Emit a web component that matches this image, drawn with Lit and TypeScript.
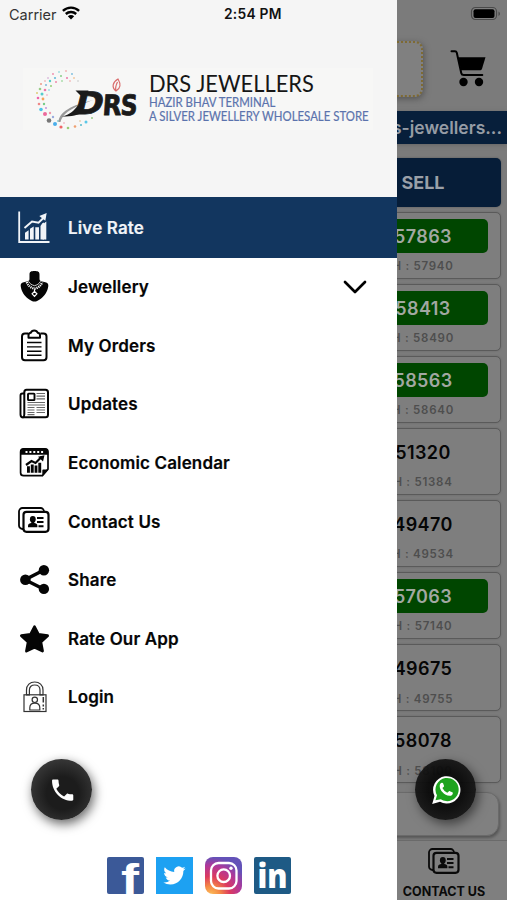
import { LitElement, html, svg, css, nothing } from "lit";
import { customElement, property } from "lit/decorators.js";

const contactIcon = svg`
  <rect x="2" y="4" width="25" height="21" rx="3.5" fill="none" stroke="currentColor" stroke-width="1.8"/>
  <rect x="6.5" y="7.8" width="25" height="20" rx="3" fill="var(--icon-bg, #fff)" stroke="currentColor" stroke-width="2.2"/>
  <ellipse cx="15.8" cy="15.2" rx="2.900" ry="3.300"/>
  <path d="M11 23.300v-1.600c0-1.600 1.800-2.200 3.400-2.600h2.800c1.600.4 3.200 1 3.200 2.600v1.600z"/>
  <path d="M14.300 17h3v3h-3z"/>
  <path d="M20 14h6.500M20 18h6.500M21.500 22.200h5" stroke="currentColor" stroke-width="2"/>`;

const icons: Record<string, unknown> = {
  chart: svg`
    <path d="M2.200 1.500V32H32.500" fill="none" stroke="currentColor" stroke-width="1.800"/>
    <path d="M8 22.800l3.600-2.500v9.200H8zM13 18.800l3.700-2.300v13H13zM18.300 17.300H22v12.200h-3.700zM23.500 16l1.800-2.800 1.700-.600v16.900h-3.500zM28.500 12h.200v17.500h-.2z"/>
    <path d="M25.500 14.500l3.800-3v18h-3.800z"/>
    <path d="M7.500 18l7.500-6.500 6.500 1.200 6.200-6" fill="none" stroke="currentColor" stroke-width="1.900"/>
    <path d="M22.300 6l7.400-3-1.400 7.800z"/>`,
  necklace: svg`
    <path d="M12.500 5.500C12.500 2.600 14.200 2 17.500 2s5 .6 5 3.500v4.700c0 1.600 1.600 2.100 4.800 2.700 3 .6 4.300 1.700 4 4-.6 5.600-4 9.900-7.200 12.500-2.500 2-4.700 3.100-6.600 3.100s-4.100-1.100-6.600-3.100c-3.200-2.600-6.600-6.900-7.200-12.500-.3-2.300 1-3.400 4-4 3.200-.6 4.800-1.100 4.800-2.700z"/>
    <path d="M9.700 13c1.500 4 4.300 6 7.800 6.600 3.500-.6 6.300-2.600 7.800-6.600" fill="none" stroke="#fff" stroke-width="2.300" stroke-dasharray="1.200 .9"/>
    <path d="M11.500 12.300c1.300 2.700 3.500 3.700 6 4.400 2.500-.7 4.700-1.700 6-4.400" fill="none" stroke="#fff" stroke-width=".8"/>
    <path d="M17.500 20.300v2m0 0l-2.400 2.500 2.400 2.500 2.400-2.500z" fill="none" stroke="#fff" stroke-width="1.200"/>`,
  clipboard: svg`
    <path d="M11 5.500H8c-1.800 0-3 1.200-3 3v20.700c0 1.800 1.200 3 3 3h18.500c1.800 0 3-1.200 3-3V8.500c0-1.800-1.200-3-3-3h-3" fill="none" stroke="currentColor" stroke-width="2"/>
    <path d="M11.500 9.800V7c0-1.300 1-2 2.200-2.200.6-1.500 1.900-2.300 3.500-2.300s3 .8 3.600 2.300c1.200.2 2.200.9 2.200 2.200v2.800z" fill="none" stroke="currentColor" stroke-width="2" stroke-linejoin="round"/>
    <path d="M10 14.500h14.500M10 18.900h14.500M10 23.200h14.500M10 27.300h14.500" stroke="currentColor" stroke-width="1.400"/>`,
  news: svg`
    <path d="M7 7.500H5.500c-1.300 0-2 .8-2 2v19c0 2 1 3 2.800 3" fill="none" stroke="currentColor" stroke-width="1.900"/>
    <path d="M9.500 3.800h19c1.500 0 2.500 1 2.500 2.500v22.500c0 1.500-1 2.500-2.500 2.500H6c1.200-.5 1.300-1.500 1.300-3v-22c0-1.500.7-2.500 2.200-2.500z" fill="none" stroke="currentColor" stroke-width="2"/>
    <rect x="11" y="7.600" width="6.500" height="6.500" rx=".6" fill="none" stroke="currentColor" stroke-width="1.900"/>
    <path d="M19.500 7.500H28M19.500 10.200H28M19.500 12.900H28M10.500 16.500H28M10.500 19H28M10.500 21.500h7M19.500 21.500H28M10.500 24h7M19.500 24H28M10.500 26.500h7M19.500 26.500H28M10.500 28.700h7" stroke="currentColor" stroke-width="1.200" opacity=".6"/>`,
  calendar: svg`
    <path d="M31 24V7c0-2-1-3.200-3-3.200H6.600c-2 0-3 1.200-3 3.200v20.700c0 2 1 3 3 3h18.800z" fill="none" stroke="currentColor" stroke-width="1.700"/>
    <path d="M3.500 9.800V6.300c0-1.500 1-2.700 2.700-2.700h22.300c1.700 0 2.700 1.200 2.700 2.700v3.500z"/>
    <path d="M8.500 7h18" stroke="#fff" stroke-width="2" stroke-dasharray="2 1.900"/>
    <path d="M31.800 24.500l-6.500 7v-5.700c0-.8.400-1.300 1.200-1.300z"/>
    <path d="M10 21.300h2.900v6.500H10zM13.800 19.600h2.900v8.200h-2.900zM17.600 20.600h2.800v7.200h-2.800zM21.300 17.800h2.900v10h-2.900z"/>
    <path d="M9 20l5.500-4 4 2 6-6" fill="none" stroke="currentColor" stroke-width="2.200"/>
    <path d="M21 11.800l6.500-1.500-1.500 6.300z"/>`,
  contact: contactIcon,
  share: svg`
    <path d="M27 8L8 17.700 27 27.300" fill="none" stroke="currentColor" stroke-width="3.400"/>
    <circle cx="26.900" cy="8.300" r="5.200"/><circle cx="8.400" cy="17.700" r="5.300"/><circle cx="26.900" cy="26.900" r="5.200"/>`,
  star: svg`
    <path d="M17.500 5.800l3.900 7.700 9.200 1.200-6.800 6.400 1.700 9-8-3.800-8 3.800 1.700-9-6.800-6.400 9.200-1.200z" stroke="currentColor" stroke-width="2.800" stroke-linejoin="round"/>`,
  lock: svg`
    <g fill="none" stroke="#333" stroke-width="1.200">
      <path d="M9.500 15.800V11c0-5 3.500-8 8.200-8s8.300 3 8.300 8v4.800h-3V11c0-3.300-2.200-5-5.300-5s-5.300 1.700-5.300 5v4.800z"/>
      <rect x="7" y="15.800" width="22" height="16.700"/>
      <circle cx="17.800" cy="20.800" r="2.700"/>
      <path d="M12.800 31v-2.300c0-3 2-4.600 5-4.600s5 1.600 5 4.600V31z"/>
      <path d="M26.300 18v5.500M26.300 25.500v2M26.300 29v1.500" stroke-width="1.500"/>
    </g>`,
};

@customElement("ui-icon")
class UiIcon extends LitElement {
  @property() name = "";
  static styles = css`
    :host { display: block; width: 35px; height: 35px; }
    svg { display: block; width: 100%; height: 100%; fill: currentColor; }
  `;
  render() {
    return html`<svg viewBox="0 0 35 35">${icons[this.name]}</svg>`;
  }
}

/* Confetti ring round the emblem: x, y, radius, colour. */
const dots: [number, number, number, string][] = [
  [67, 70, .8, "#e88"], [60, 71, .8, "#6cc"], [54, 73, .9, "#e8a"], [73, 73, .9, "#7bd"], [62, 75, 1, "#8c8"],
  [68, 77, 1, "#e7a"], [75, 77, .8, "#ea6"], [56, 77, 1.1, "#6bd"], [49, 77, .8, "#c9c"], [79, 80, .7, "#bbb"],
  [46, 80, .8, "#e99"], [51, 80, 1.2, "#5cc"], [57, 81, 1, "#e8a"], [63, 80, .8, "#7c7"], [71, 80, .7, "#e88"],
  [42, 83, 1, "#e98"], [47, 84, 1.1, "#8bd"], [52, 85, 1, "#9c7"], [41, 88, 1.3, "#9c8"], [46, 89, 1.3, "#e7a"],
  [50, 89, .8, "#6cd"], [38, 92, 1, "#dc7"], [43, 93, 1.5, "#5cc"], [39, 97, 1.3, "#e6a"], [44, 98, 1.4, "#f8a35c"],
  [48, 94, .8, "#e9b"], [40, 103, 1.3, "#e88"], [45, 103, 1.2, "#7c8"], [42, 108.5, 1.8, "#4ac4e8"], [47, 107, .9, "#b8d"],
  [46, 113, 2, "#ec6a9c"], [51, 112, 1.2, "#e9a"], [50, 119.500, 2.3, "#777"], [54, 116, 1.2, "#9ad"], [56, 123, 2, "#4aaeea"],
  [62, 126, 1.6, "#e66"], [59, 120, .9, "#8cc"], [69, 127, 1.3, "#9c7"], [65, 122, .8, "#e9a"], [76, 125.5, 1.3, "#f0a070"],
  [82, 124, 1, "#5bc"], [87, 121, 1.5, "#5ac8e8"], [93, 117, 1, "#9c8"], [81, 120, .8, "#db8"],
];

@customElement("brand-logo")
class BrandLogo extends LitElement {
  static styles = css`
    :host { display: flex; width: 350px; height: 62px; background: #f7f7f6; }
    svg { width: 126px; height: 64px; flex: none; }
    .words { display: flex; flex-direction: column; padding-top: 3px; white-space: nowrap; }
    .words > div { width: max-content; transform-origin: left; }
    .name { font: 400 23.5px/25px Lato, sans-serif; color: #161616; transform: scaleX(.93); }
    .tag { font: 400 12.5px/14px Lato, sans-serif; color: #5b73ad; -webkit-text-stroke: .2px #5b73ad; transform: scaleX(.913); }
  `;
  render() {
    return html`
      <svg viewBox="24 67 126 64">
        ${dots.map(([x, y, r, c]) => svg`<circle cx=${x} cy=${y} r=${r} fill=${c}/>`)}
        <path d="M59.500 121c.5-10 13-17 35-22-17 6-30 11-33 22z" fill="#999"/>
        <path d="M63 115.500c8-2 12-6 16-11l6 6c-6 4-12 5-22 5z" fill="#1a1a1a"/>
        <path d="M76.500 89.500h13l-2 5h-6z" fill="#1a1a1a"/>
        <g font-family="DejaVu Sans" font-weight="700" fill="#1a1a1a" stroke="#1a1a1a" stroke-width=".8">
          <text transform="translate(74 113) skewX(-14)" font-size="31" textLength="28" lengthAdjust="spacingAndGlyphs">D</text>
          <text transform="translate(103 114) skewX(-4)" font-size="28" textLength="19" lengthAdjust="spacingAndGlyphs">R</text>
          <text transform="translate(121 114) skewX(-4)" font-size="28" textLength="17" lengthAdjust="spacingAndGlyphs">S</text>
        </g>
        <path d="M117 90c-5-4-3-9 2-12 3 5 3 9-2 12zm0 0c-1-3 0-6 1.5-9" fill="none" stroke="#d96b6b" stroke-width="1.200"/>
      </svg>
      <div class="words">
        <div class="name">DRS JEWELLERS</div>
        <div class="tag">HAZIR BHAV TERMINAL</div>
        <div class="tag">A SILVER JEWELLERY WHOLESALE STORE</div>
      </div>`;
  }
}

@customElement("rate-card")
class RateCard extends LitElement {
  @property() price = "";
  @property() high = "";
  @property({ type: Boolean }) up = false;
  static styles = css`
    :host { display: flex; flex-direction: column; align-items: center; width: 156px; height: 67px; box-sizing: border-box;
      border: 1.5px solid #5a5a5a; border-radius: 5px; background: #7e7e7e; padding-top: 6px; box-shadow: 0 0 2px #666; }
    .price { width: 130px; height: 34.5px; border-radius: 5px; text-align: center; color: #060606;
      font: 600 18px/36px Inter, sans-serif; letter-spacing: .4px; }
    .up { background: #004600; color: #a2a8a2; }
    .high { font: 600 11.5px/15px Inter, sans-serif; color: #4e4e4e; letter-spacing: .75px; padding-top: 6px; }
  `;
  render() {
    return html`<div class="price ${this.up ? "up" : ""}">${this.price}</div><div class="high">H : ${this.high}</div>`;
  }
}

const rates = [
  { price: "57863", high: "57940", up: true },
  { price: "58413", high: "58490", up: true },
  { price: "58563", high: "58640", up: true },
  { price: "51320", high: "51384", up: false },
  { price: "49470", high: "49534", up: false },
  { price: "57063", high: "57140", up: true },
  { price: "49675", high: "49755", up: false },
  { price: "58078", high: "58100", up: false },
];

const menu = [
  { icon: "chart", label: "Live Rate", active: true },
  { icon: "necklace", label: "Jewellery", expand: true },
  { icon: "clipboard", label: "My Orders" },
  { icon: "news", label: "Updates" },
  { icon: "calendar", label: "Economic Calendar" },
  { icon: "contact", label: "Contact Us" },
  { icon: "share", label: "Share" },
  { icon: "star", label: "Rate Our App" },
  { icon: "lock", label: "Login" },
];

@customElement("app-root")
class AppRoot extends LitElement {
  static styles = css`
    :host { display: block; position: relative; width: 507px; height: 900px; overflow: hidden; font-family: Inter, sans-serif; }
    svg { display: block; flex: none; }
    .page { display: flex; flex-direction: column; align-items: flex-end; height: 900px; background: #7b7b7b; }
    .status { height: 27px; display: flex; align-items: center; padding-right: 6px; }
    .top { height: 84px; display: flex; align-items: center; padding-right: 20px; gap: 27px; }
    .top svg { margin-bottom: 2px; }
    .frame { width: 150px; height: 52px; border: 2px dotted #7e6a33; border-radius: 8px; background: #808080; box-shadow: 1px 2px 6px #555; }
    .ticker { align-self: stretch; height: 33px; background: #071f3b; color: #969ca5; text-align: right; padding-right: 5px;
      font: 600 17.5px/34px Inter, sans-serif; box-shadow: 0 1px 4px #666; }
    .sell { width: 156px; height: 49px; margin: 14px 6px 4.5px 0; border-radius: 5px; background: #061d38; color: #9aa0a8;
      text-align: center; font: 700 18px/50px Inter, sans-serif; box-shadow: 0 0 2px #555; }
    .rates { display: flex; flex-direction: column; gap: 5.1px; padding-right: 6px; }
    .panel { width: 200px; height: 44px; margin: 9px 8px 0 0; box-sizing: border-box; border: 1px solid #6a6a6a; border-radius: 12px;
      background: #808080; box-shadow: 1px 2px 3px #555; }
    .tabs { margin-top: auto; align-self: stretch; height: 60px; box-sizing: border-box; border-top: 1px solid #6a6a6a; background: #7f7f7f;
      display: flex; justify-content: flex-end; }
    .tab { width: 126px; display: flex; flex-direction: column; align-items: center; --icon-bg: #7f7f7f;
      font: 700 12.5px/16px Inter, sans-serif; color: #0a0a0a; padding-top: 4px; box-sizing: border-box; }
    .tab span { padding-top: 4px; }
    .drawer { position: absolute; left: 0; top: 0; width: 397px; height: 900px; background: #fff; display: flex; flex-direction: column; }
    .head { height: 196.5px; flex: none; background: #f5f5f5; }
    .bar { display: flex; align-items: center; height: 28px; padding-left: 9px; font-size: 14.5px; color: #333; }
    .carrier { letter-spacing: 0; margin-right: 6px; width: 47px; white-space: nowrap; }
    .bar svg { margin-bottom: 2px; }
    .clock { font: 600 13.8px/28px Inter, sans-serif; color: #111; margin-left: 144px; letter-spacing: .25px; }
    .logo { padding: 40px 0 0 23px; }
    .row { display: flex; align-items: center; height: 58.6px; flex: none; padding: 0 30px 0 17px; gap: 16px;
      font-size: 17px; font-weight: 600; color: #050505; }
    .row ui-icon { --icon-bg: #fff; }
    .active { height: 61px; background: #12365f; color: #f1f4f8; }
    .label { flex: 1; letter-spacing: .14px; padding-top: 1px; -webkit-text-stroke: .2px currentColor; }
    .social { display: flex; gap: 12px; margin: auto 0 6px 107px; }
    .social svg { overflow: visible; }
    .fab { position: absolute; top: 759px; width: 61px; height: 61px; border-radius: 50%; display: flex; align-items: center; justify-content: center;
      background: radial-gradient(circle at 52% 56%, #1c1c1c 35%, #363636 72%); box-shadow: 2px 4px 11px rgba(0, 0, 0, .6); }
    .call { left: 31px; }
    .chat { left: 415px; background: radial-gradient(circle, rgba(8, 8, 8, .94) 40%, rgba(20, 20, 20, .92) 75%); box-shadow: 3px 4px 11px rgba(0, 0, 0, .5); }
  `;

  render() {
    return html`
      <div class="page">
        <div class="status">
          <svg width="31" height="16" viewBox="0 0 31 16">
            <rect x="1.5" y="1.5" width="25" height="12" rx="4" fill="#808080" stroke="#4a4a4a" stroke-width="1.2"/>
            <rect x="3.5" y="3.3" width="21" height="8.7" rx="2" fill="#000"/>
            <path d="M28.500 5.500v4.500q1.500-.7 1.500-2.200T28.500 5.500z" fill="#4a4a4a"/>
          </svg>
        </div>
        <div class="top">
          <div class="frame"></div>
          <svg width="37" height="38" viewBox="0 0 37 38">
            <path d="M1.500 2.200h3.500c1 0 1.500.5 1.800 1.500l4.500 20.500c.3 1.300 1.200 1.800 2.500 1.800h18.500" fill="none" stroke="#000" stroke-width="2" stroke-linecap="round"/>
            <path d="M8 8.200h27.500l-3.500 11.500c-.4 1.200-1.200 1.600-2.300 1.600H11z"/>
            <circle cx="13.500" cy="33" r="4.200"/><circle cx="29" cy="33" r="4.200"/>
          </svg>
        </div>
        <div class="ticker">www.drs-jewellers...</div>
        <div class="sell">SELL</div>
        <div class="rates">
          ${rates.map((r) => html`<rate-card .price=${r.price} .high=${r.high} .up=${r.up}></rate-card>`)}
        </div>
        <div class="panel"></div>
        <div class="tabs"><div class="tab"><ui-icon name="contact"></ui-icon><span>CONTACT US</span></div></div>
      </div>

      <div class="drawer">
        <div class="head">
          <div class="bar">
            <span class="carrier">Carrier</span>
            <svg width="18" height="14" viewBox="0 0 18 14" fill="none" stroke="#000" stroke-width="2.4">
              <path d="M.9 4.800C5.500.5 12.500.5 17.100 4.800M3.800 8c3-2.700 7.400-2.700 10.400 0"/>
              <path d="M9 13.600L5.800 10.300q3.200-2.500 6.400 0z" fill="#000" stroke="none"/>
            </svg>
            <span class="clock">2:54 PM</span>
          </div>
          <div class="logo"><brand-logo></brand-logo></div>
        </div>
        ${menu.map((m) => html`
          <div class="row ${m.active ? "active" : ""}">
            <ui-icon .name=${m.icon}></ui-icon>
            <span class="label">${m.label}</span>
            ${m.expand ? html`<svg width="24" height="16" viewBox="0 0 24 16"><path d="M2 3L12 13 22 3" fill="none" stroke="#000" stroke-width="2.7" stroke-linecap="round" stroke-linejoin="round"/></svg>` : nothing}
          </div>`)}
        <div class="social">
          <svg width="37" height="37" viewBox="0 0 37 37">
            <rect width="37" height="37" rx="2" fill="#3b5998"/>
            <text x="14" y="37" font-family="Liberation Sans" font-weight="700" font-size="42" textLength="18" lengthAdjust="spacingAndGlyphs" fill="#fff">f</text>
          </svg>
          <svg width="37" height="37" viewBox="0 0 37 37">
            <rect width="37" height="37" fill="#1da1f2"/>
            <path transform="translate(7.3 7.3) scale(.93)" fill="#fff" d="M23.950 4.570a10 10 0 01-2.820.770 4.960 4.960 0 002.160-2.720c-.950.550-2 .950-3.130 1.180a4.920 4.920 0 00-8.380 4.480C7.690 8.090 4.070 6.130 1.640 3.160a4.820 4.820 0 00-.670 2.480c0 1.710.870 3.210 2.190 4.100a4.900 4.900 0 01-2.230-.620v.060a4.920 4.920 0 003.950 4.830 5 5 0 01-2.210.080 4.940 4.940 0 004.600 3.420A9.870 9.870 0 010 19.540a14 14 0 007.550 2.210c9.050 0 14-7.500 14-13.980 0-.210 0-.420-.020-.630a9.940 9.940 0 002.460-2.550z"/>
          </svg>
          <svg width="37" height="37" viewBox="0 0 37 37">
            <defs>
              <radialGradient id="warm" cx=".15" cy="1.05" r="1.05">
                <stop offset="0" stop-color="#fdc35a"/><stop offset=".25" stop-color="#f58a45"/>
                <stop offset=".5" stop-color="#dc3a5f"/><stop offset=".78" stop-color="#b0379a"/><stop offset="1" stop-color="#6352b8"/>
              </radialGradient>
            </defs>
            <rect width="37" height="37" rx="8" fill="url(#warm)"/>
            <g fill="none" stroke="#fff" stroke-width="2.3">
              <rect x="6" y="6" width="25.5" height="25.5" rx="7.5"/><circle cx="18.7" cy="18.7" r="6.3"/>
            </g>
            <circle cx="26" cy="11.2" r="1.7" fill="#fff"/>
          </svg>
          <svg width="37" height="37" viewBox="0 0 37 37">
            <rect width="37" height="37" rx="2" fill="#1e5a85"/>
            <text x="3.500" y="31" font-family="Open Sans" font-weight="800" font-size="33" textLength="30" lengthAdjust="spacingAndGlyphs" fill="#fff">in</text>
          </svg>
        </div>
      </div>

      <div class="fab call">
        <svg width="24" height="24" viewBox="0 0 24 24" fill="#fff"><path transform="translate(-1.5 -2) scale(1.18)" d="M6.620 10.790a15.150 15.150 0 006.590 6.590l2.200-2.200c.270-.270.670-.360 1.020-.240 1.120.370 2.330.570 3.570.570.550 0 1 .450 1 1V20c0 .550-.450 1-1 1C10.610 21 3 13.390 3 4c0-.550.450-1 1-1h3.500c.550 0 1 .450 1 1 0 1.250.200 2.450.570 3.570.110.350.030.740-.250 1.020z"/></svg>
      </div>
      <div class="fab chat">
        <svg width="30" height="30" viewBox="0 0 30 30">
          <path d="M1.200 29L3.500 21A13.700 13.700 0 1 1 9 26.800z" fill="#fff"/>
          <path d="M4.500 25.300l1.500-5A11.600 11.600 0 1 1 9.800 24.300z" fill="#1ea31e"/>
          <path transform="translate(6.500 5) scale(.74)" fill="#fff" d="M6.620 10.790a15.150 15.150 0 006.590 6.590l2-2c.400-.400.900-.450 1.400-.240l3.400 1.500c.700.300.900.800.700 1.500-.500 2-2.300 3.300-4.300 3.100C9 20.500 3 14 3 8c0-2.200 1.300-4 3-4.300.700-.100 1.200.100 1.500.8l1.300 3.300c.200.500 0 .900-.300 1.300z"/>
        </svg>
      </div>`;
  }
}
